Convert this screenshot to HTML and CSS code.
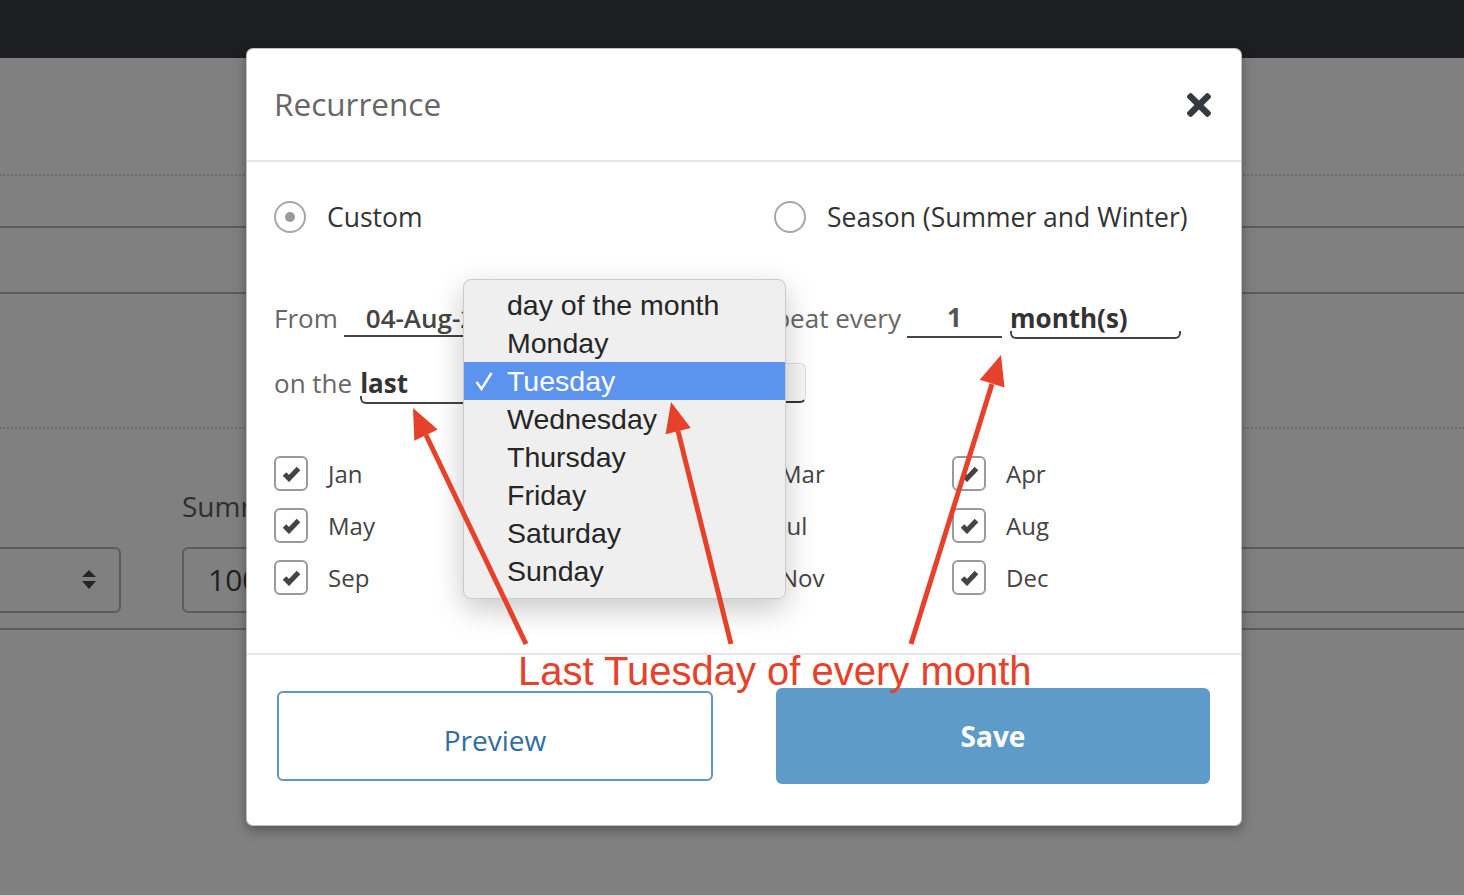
FILE: index.html
```html
<!DOCTYPE html>
<html lang="en">
  <head>
    <meta charset="UTF-8" />
    <meta name="viewport" content="width=device-width, initial-scale=1.0" />
    <title>Recurrence</title>
    <link rel="stylesheet" href="styles.css">
  </head>

  <body>

    <div class="topbar"></div>

    <!-- page behind the backdrop -->
    <div class="page">
      <div class="bg-row dotted row-a"></div>
      <div class="bg-row row-b"></div>
      <div class="bg-row row-c"></div>
      <div class="bg-row dotted row-d"></div>
      <div class="bg-form">
        <div class="bg-box bg-select">
          <svg width="16" height="20" viewBox="0 0 16 20"><path d="M1 7 L8 0 L15 7 Z M1 11 L15 11 L8 19 Z" fill="#262626"/></svg>
        </div>
        <div class="bg-field">
          <div class="bg-label">Summer price</div>
          <div class="bg-box bg-input">100</div>
        </div>
        <div class="bg-box bg-wide"></div>
      </div>
    </div>

    <div class="modal">
      <div class="modal-header">
        <h4>Recurrence</h4>
        <button class="close">
          <svg width="24" height="24" viewBox="0 80 352 352"><path fill="#343a40" d="M242.72 256l100.07-100.07c12.28-12.28 12.28-32.19 0-44.48l-22.24-22.24c-12.28-12.28-32.19-12.280-44.48 0L176 189.28 75.93 89.21c-12.28-12.28-32.19-12.28-44.48 0L9.21 111.45c-12.28 12.28-12.28 32.19 0 44.48L109.28 256 9.21 356.07c-12.28 12.28-12.28 32.19 0 44.48l22.24 22.24c12.28 12.28 32.2 12.28 44.48 0L176 322.72l100.07 100.07c12.28 12.28 32.2 12.28 44.48 0l22.24-22.24c12.28-12.28 12.28-32.19 0-44.48L242.72 256z"/></svg>
        </button>
      </div>

      <div class="modal-body">
        <div class="radio-row">
          <label class="radio checked"><span class="circle"></span>Custom</label>
          <label class="radio"><span class="circle"></span>Season (Summer and Winter)</label>
        </div>

        <div class="line-row">
          <div class="group">
            <span class="lbl">From</span>
            <div class="field date">04-Aug-2019</div>
          </div>
          <div class="group">
            <span class="lbl">Repeat every</span>
            <div class="field num">1</div>
            <div class="field unit">month(s)</div>
          </div>
        </div>

        <div class="line-row second">
          <span class="lbl">on the</span>
          <div class="field which">last</div>
          <div class="field day">Tuesday</div>
        </div>

        <div class="months">
          <label class="month"><span class="box"></span>Jan</label>
          <label class="month"><span class="box"></span>Feb</label>
          <label class="month"><span class="box"></span>Mar</label>
          <label class="month"><span class="box"></span>Apr</label>
          <label class="month"><span class="box"></span>May</label>
          <label class="month"><span class="box"></span>Jun</label>
          <label class="month"><span class="box"></span>Jul</label>
          <label class="month"><span class="box"></span>Aug</label>
          <label class="month"><span class="box"></span>Sep</label>
          <label class="month"><span class="box"></span>Oct</label>
          <label class="month"><span class="box"></span>Nov</label>
          <label class="month"><span class="box"></span>Dec</label>
        </div>

        <!-- open native menu of the day select -->
        <div class="day-menu">
          <div class="item">day of the month</div>
          <div class="item">Monday</div>
          <div class="item selected">
            <svg class="tick" width="18" height="20" viewBox="0 0 18 20"><polyline points="1.5,11 6.5,18 16.5,2" fill="none" stroke="#fff" stroke-width="2.4"/></svg>
            Tuesday
          </div>
          <div class="item">Wednesday</div>
          <div class="item">Thursday</div>
          <div class="item">Friday</div>
          <div class="item">Saturday</div>
          <div class="item">Sunday</div>
        </div>
      </div>

      <div class="modal-footer">
        <button class="btn btn-outline">Preview</button>
        <button class="btn btn-primary">Save</button>
      </div>
    </div>

    <!-- annotation drawn over the screenshot -->
    <div class="notes">
      <svg width="1464" height="895" viewBox="0 0 1464 895">
        <g stroke="#e6412a" stroke-width="5" fill="none">
          <line x1="526" y1="644" x2="426" y2="435"/>
          <line x1="731" y1="644" x2="678" y2="431"/>
          <line x1="911" y1="644" x2="992" y2="384"/>
        </g>
        <g fill="#e6412a">
          <polygon points="413,408 437.7,429.5 414.3,440.7"/>
          <polygon points="671,402 690.8,428 665.6,434.2"/>
          <polygon points="1001,355 1004.5,387.5 979.7,379.7"/>
        </g>
      </svg>
      <div class="note-text">Last Tuesday of every month</div>
    </div>

    <script>
      document.querySelectorAll(".month .box").forEach((box) => {
        box.innerHTML = '<svg width="19" height="17" viewBox="0 0 19 17"><polyline points="2.5,9 7,13.5 16.5,3.5" fill="none" stroke="#444" stroke-width="5" stroke-linejoin="miter"/></svg>';
      });
    </script>
  </body>
</html>
```

FILE: styles.css
```css
body {
  margin: 0;
  width: 1464px;
  height: 895px;
  overflow: hidden;
  background: #808080;
  font-family: "Open Sans", "Noto Sans", sans-serif;
  position: relative;
}

.topbar {
  height: 58px;
  background: #1d1e22;
}

/* background page */
.page {
  overflow: hidden;
}
.bg-row {
  border-bottom: 2px solid #5c5c5c;
}
.bg-row.dotted {
  border-bottom: 2px dotted #6c6c6c;
}
.row-a { height: 116px; }
.row-b { height: 50px; }
.row-c { height: 64px; }
.row-d { height: 133px; }

.bg-form {
  display: flex;
  align-items: flex-end;
  gap: 61px;
  padding: 60px 0 15px;
  border-bottom: 2px solid #5c5c5c;
  overflow: hidden;
}
.bg-box {
  flex-shrink: 0;
  height: 62px;
  border: 2px solid #5c5c5c;
  border-radius: 6px;
}
.bg-select {
  width: 115px;
  margin-left: -20px;
  display: flex;
  align-items: center;
  justify-content: flex-end;
  padding-right: 22px;
}
.bg-field {
  flex-shrink: 0;
  display: flex;
  flex-direction: column;
  gap: 24px;
}
.bg-label {
  font-size: 28px;
  line-height: 34px;
  color: #2e2e2e;
}
.bg-input {
  width: 900px;
  font-size: 30px;
  line-height: 62px;
  padding-left: 24px;
  color: #1f1f1f;
}
.bg-wide {
  width: 600px;
}

/* modal */
.modal {
  position: absolute;
  left: 246px;
  top: 48px;
  width: 994px;
  background: #fff;
  border: 1px solid rgba(0, 0, 0, 0.25);
  border-radius: 7px;
  box-shadow: 0 4px 12px rgba(0, 0, 0, 0.35);
}

.modal-header {
  height: 111px;
  display: flex;
  align-items: center;
  justify-content: space-between;
  padding: 0 30px 0 27px;
  border-bottom: 2px solid #e3e6ea;
}
.modal-header h4 {
  margin: 0 0 3px;
  font-size: 31.5px;
  font-weight: 400;
  color: #666;
}
.close {
  background: none;
  border: none;
  padding: 0;
  display: flex;
}

.modal-body {
  position: relative;
  padding: 39px 28px 58px 27px;
}

.radio-row {
  display: flex;
  height: 32px;
}
.radio {
  display: flex;
  align-items: center;
  gap: 21px;
  font-size: 26.5px;
  color: #333;
}
.radio:first-child {
  width: 500px;
}
.circle {
  width: 28px;
  height: 28px;
  border: 2px solid #a6a6a6;
  border-radius: 50%;
  display: flex;
  align-items: center;
  justify-content: center;
}
.radio.checked .circle::after {
  content: "";
  width: 10px;
  height: 10px;
  border-radius: 50%;
  background: #999;
}

.line-row {
  display: flex;
  justify-content: space-between;
  align-items: center;
  height: 40px;
  margin-top: 65px;
  padding-right: 32px;
}
.line-row.second {
  justify-content: flex-start;
  margin-top: 25px;
}
.group {
  display: flex;
  align-items: center;
  gap: 6px;
}
.lbl {
  font-size: 26px;
  color: #666;
}
.line-row.second .lbl {
  margin-right: 8px;
}
.field {
  position: relative;
  height: 38px;
  line-height: 38px;
  border-bottom: 2px solid #444;
  font-size: 26px;
  font-weight: 700;
  color: #333;
}
.date {
  width: 300px;
  padding-left: 22px;
  font-weight: 600;
  color: #444;
  box-sizing: border-box;
}
.num {
  width: 95px;
  text-align: center;
  color: #555;
  margin-right: 2px;
}
.unit {
  width: 171px;
  border-bottom: none;
}
.unit::after,
.which::after {
  content: "";
  position: absolute;
  left: 0;
  right: 0;
  bottom: -2px;
  height: 6px;
  border: 2px solid #444;
  border-top: none;
  border-radius: 0 0 6px 6px;
}
.which {
  width: 103px;
  border-bottom: none;
}
.which::after {
  border-right: none;
  border-radius: 0 0 0 6px;
}
.day {
  width: 341px;
  height: 37px;
  background: #f7f7f7;
  border: 1px solid #dedede;
  border-bottom: 2px solid #333;
  border-radius: 0 6px 6px 0;
  box-sizing: content-box;
}

.months {
  display: grid;
  grid-template-columns: repeat(4, 226px);
  row-gap: 17px;
  margin-top: 53px;
}
.month {
  display: flex;
  align-items: center;
  gap: 20px;
  font-size: 24px;
  color: #444;
  height: 35px;
}
.box {
  width: 30px;
  height: 31px;
  border: 2px solid #9a9a9a;
  border-radius: 6px;
  display: flex;
  align-items: center;
  justify-content: center;
}

.day-menu {
  position: absolute;
  left: 216px;
  top: 117px;
  width: 321px;
  padding: 6px 0 8px;
  background: #efefef;
  border: 1px solid #cbcbcb;
  border-radius: 8px;
  box-shadow: 0 10px 30px rgba(0, 0, 0, 0.22);
  font-family: "Liberation Sans", Arial, sans-serif;
  font-size: 28.5px;
  color: #262626;
}
.item {
  position: relative;
  height: 38px;
  line-height: 38px;
  padding-left: 43px;
}
.item.selected {
  background: #5b93ee;
  color: #fff;
}
.tick {
  position: absolute;
  left: 11px;
  top: 9px;
}

.modal-footer {
  display: flex;
  justify-content: space-between;
  align-items: flex-start;
  padding: 33px 31px 41px 30px;
  border-top: 2px solid #e3e6ea;
}
.btn {
  font-family: "Open Sans", sans-serif;
  font-size: 28px;
  border-radius: 6px;
  cursor: pointer;
}
.btn-outline {
  width: 436px;
  height: 90px;
  margin-top: 3px;
  padding-top: 8px;
  background: #fff;
  border: 2px solid #5d97c6;
  color: #2f6ea5;
}
.btn-primary {
  width: 434px;
  height: 96px;
  background: #5f9bc9;
  border: none;
  color: #fff;
  font-weight: 700;
}

/* annotation */
.notes {
  position: absolute;
  left: 0;
  top: 0;
  width: 1464px;
  height: 895px;
  pointer-events: none;
}
.notes svg {
  position: absolute;
  left: 0;
  top: 0;
}
.note-text {
  position: absolute;
  left: 518px;
  top: 651px;
  font-family: "Liberation Sans", Arial, sans-serif;
  font-size: 40px;
  line-height: 40px;
  color: #e6412a;
  white-space: nowrap;
}
```
